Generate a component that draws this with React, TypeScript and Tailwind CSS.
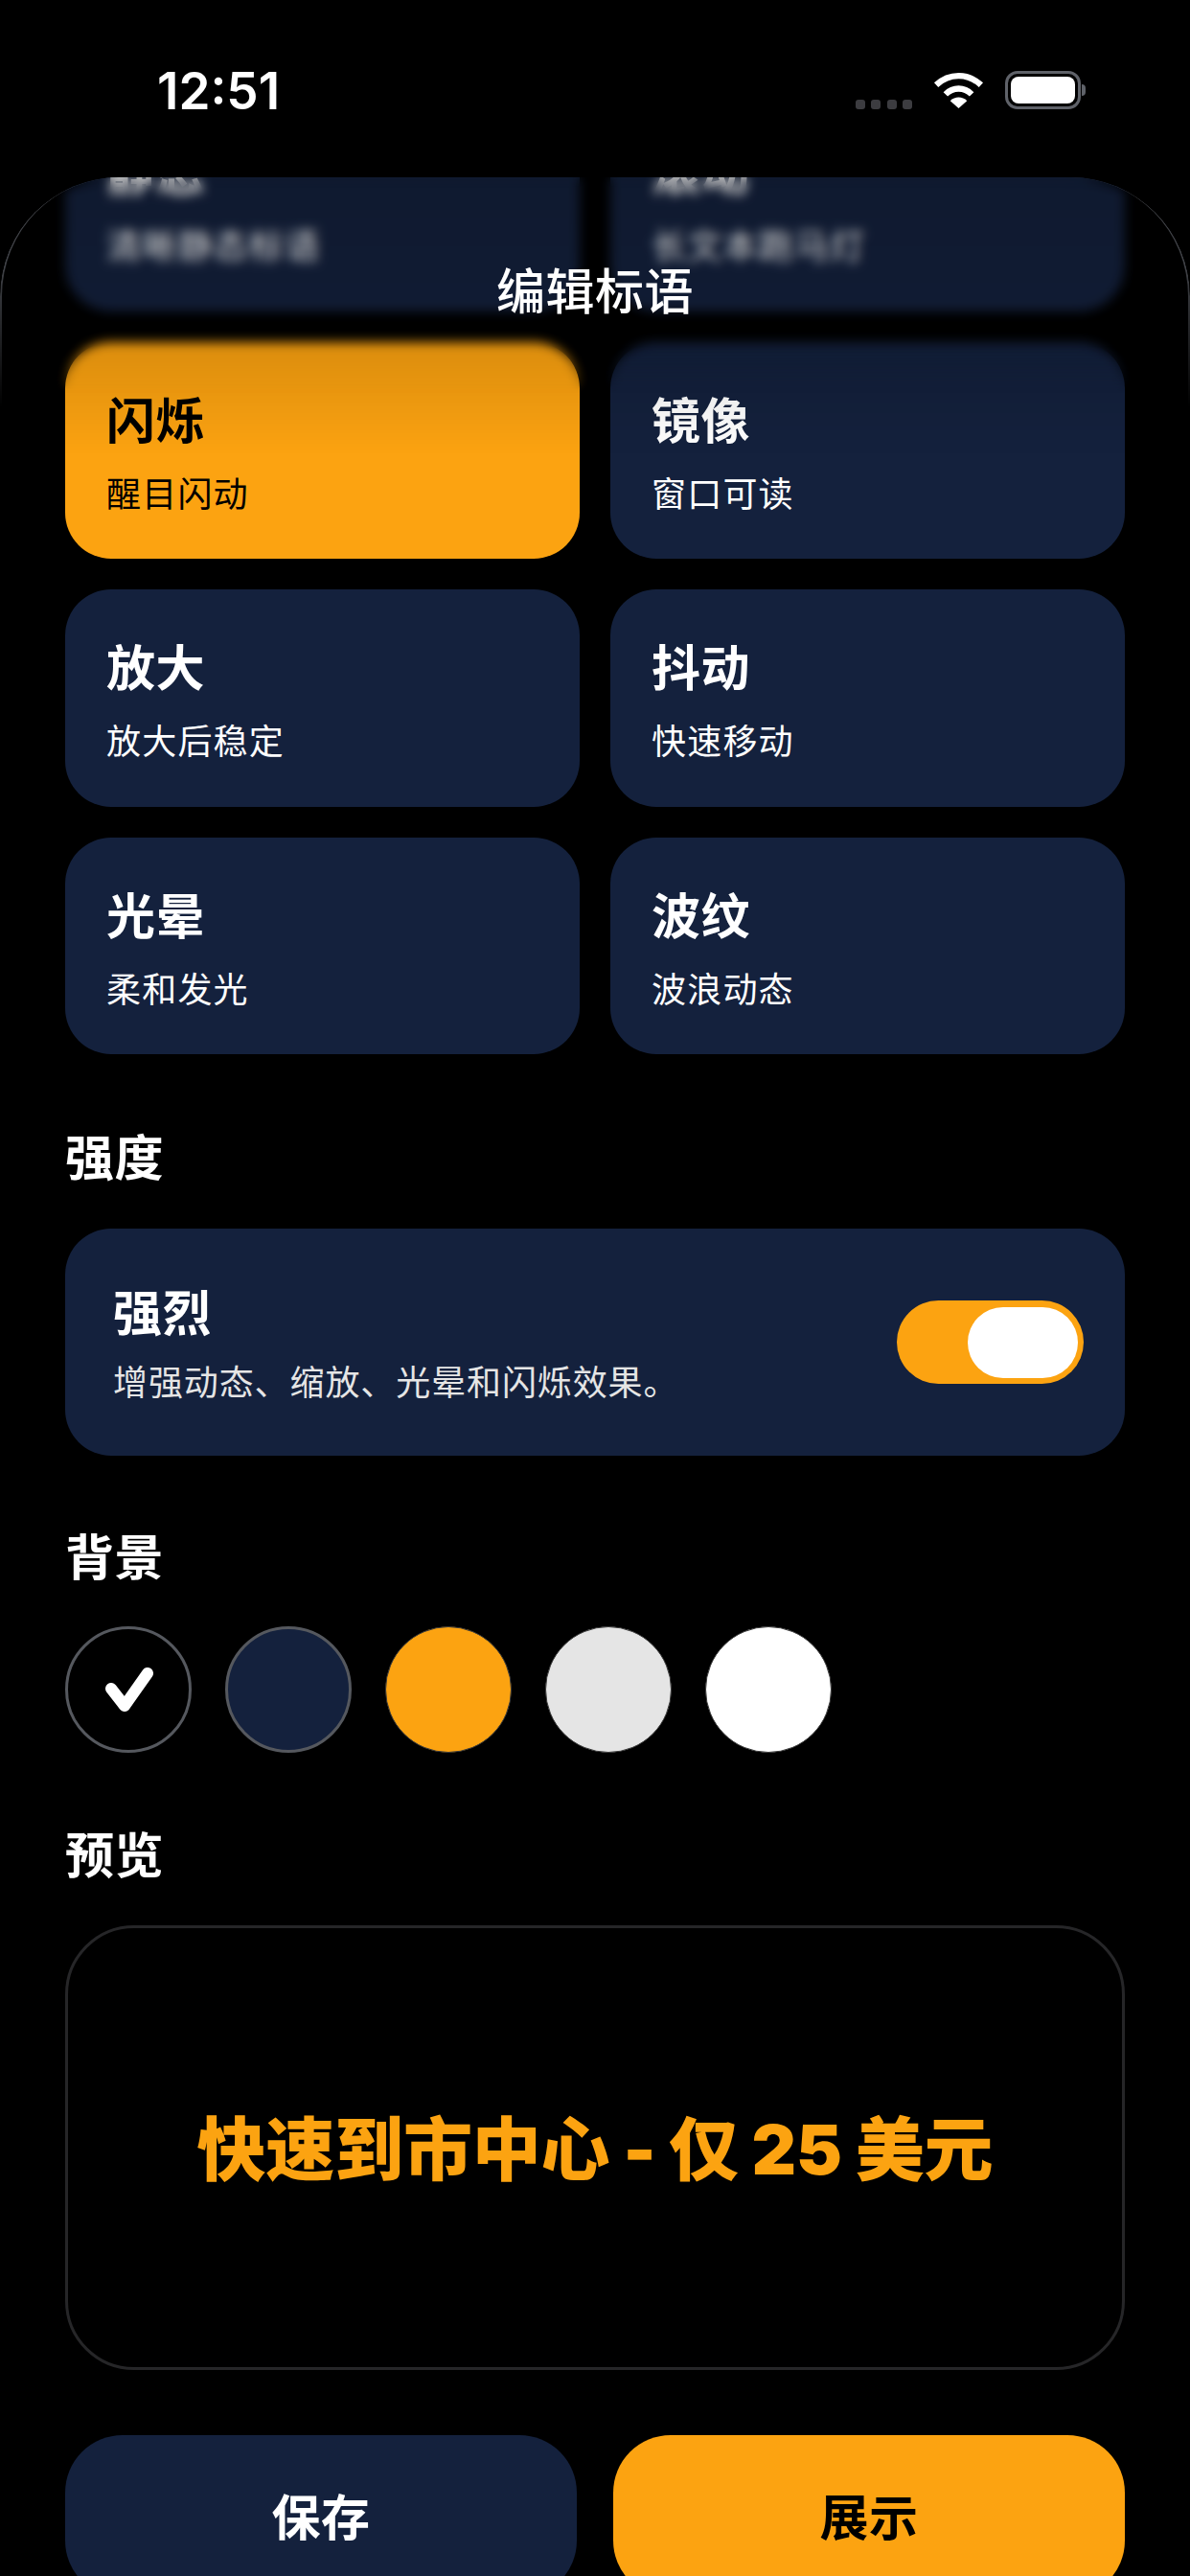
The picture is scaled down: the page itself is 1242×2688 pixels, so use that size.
const fontStack = { fontFamily: 'Inter, "Noto Sans CJK SC", "Noto Sans", sans-serif' }

const modes = [
  { title: '静态', desc: '清晰静态标语' },
  { title: '滚动', desc: '长文本跑马灯' },
  { title: '闪烁', desc: '醒目闪动', active: true },
  { title: '镜像', desc: '窗口可读' },
  { title: '放大', desc: '放大后稳定' },
  { title: '抖动', desc: '快速移动' },
  { title: '光晕', desc: '柔和发光' },
  { title: '波纹', desc: '波浪动态' },
]

const swatches = [
  { color: 'bg-black', border: 'border-[3px] border-[#55585e]', selected: true },
  { color: 'bg-[#14213d]', border: 'border-[3px] border-[#55585e]' },
  { color: 'bg-[#fca311]', border: 'border border-[#3a3a3a]' },
  { color: 'bg-[#e5e5e5]', border: 'border border-[#3a3a3a]' },
  { color: 'bg-white', border: 'border border-[#3a3a3a]' },
]

function StatusBar() {
  return (
    <div className="flex h-[185px] items-start justify-between pl-[164px] pr-[109px] pt-[64px]">
      <span className="text-[53px] font-semibold leading-[62px] text-white">12:51</span>
      <div className="flex items-center gap-[22px] pt-[10px]">
        <div className="mt-[29px] flex gap-[6.5px]">
          <span className="h-[10px] w-[10px] rounded-[3px] bg-[#3c3c40]" />
          <span className="h-[10px] w-[10px] rounded-[3px] bg-[#3c3c40]" />
          <span className="h-[10px] w-[10px] rounded-[3px] bg-[#3c3c40]" />
          <span className="h-[10px] w-[10px] rounded-[3px] bg-[#3c3c40]" />
        </div>
        <svg width="53" height="38" viewBox="0 0 54 39" fill="none">
          <path d="M3 14C17 1 37 1 51 14" stroke="white" strokeWidth="6.5" />
          <path d="M13 24C21 16 33 16 41 24" stroke="white" strokeWidth="6.5" />
          <path d="M27 39L18 31C23 26 31 26 36 31Z" fill="white" />
        </svg>
        <div className="flex items-center">
          <div className="h-[40px] w-[79px] rounded-[13px] border-[3px] border-[#5f6269] p-[3px]">
            <div className="h-full w-full rounded-[8px] bg-white" />
          </div>
          <span className="ml-[1px] h-[12px] w-[4px] rounded-r-full bg-[#5f6269]" />
        </div>
      </div>
    </div>
  )
}

function ModeCard({ title, desc, active }: { title: string; desc: string; active?: boolean }) {
  return (
    <div className={`h-[226.5px] rounded-[48px] px-[43px] pt-[47px] ${active ? 'bg-[#fca311] text-black' : 'bg-[#14213d] text-white'}`}>
      <div className="text-[51px] font-bold leading-[72px] tracking-[0.5px]">{title}</div>
      <div className="mt-[15px] text-[36px] leading-[50px] tracking-[1.2px]">{desc}</div>
    </div>
  )
}

function SectionTitle({ children }: { children: string }) {
  return <h2 className="text-[51px] font-bold leading-[70px] tracking-[0.5px] text-white">{children}</h2>
}

export default function App() {
  return (
    <div className="h-[2688px] overflow-hidden bg-black" style={fontStack}>
      <StatusBar />
      <div className="relative h-[2503px] overflow-hidden rounded-t-[124px]">
        <div className="-mt-[87px] px-[68px]">
          <div className="grid grid-cols-2 gap-[32px]">
            {modes.map((m) => (
              <ModeCard key={m.title} title={m.title} desc={m.desc} active={m.active} />
            ))}
          </div>

          <div className="mt-[74px]"><SectionTitle>强度</SectionTitle></div>
          <div className="mt-[38px] flex h-[237px] items-center justify-between rounded-[48px] bg-[#14213d] pl-[50px] pr-[43px]">
            <div className="pt-[6px] text-white">
              <div className="-mt-[4px] text-[51px] font-bold leading-[72px] tracking-[0.5px]">强烈</div>
              <div className="mt-[11px] text-[36px] leading-[50px] tracking-[0.9px] text-[#e5e5e5]">增强动态、缩放、光晕和闪烁效果。</div>
            </div>
            <div className="flex h-[87px] w-[195px] items-center justify-end rounded-full bg-[#fca311] pr-[6px]">
              <div className="h-[74px] w-[115px] rounded-full bg-white" />
            </div>
          </div>

          <div className="mt-[72px]"><SectionTitle>背景</SectionTitle></div>
          <div className="mt-[36px] flex gap-[35px]">
            {swatches.map((s) => (
              <div key={s.color} className={`flex h-[132px] w-[132px] items-center justify-center rounded-full ${s.color} ${s.border}`}>
                {s.selected && (
                  <svg width="51" height="48" viewBox="0 0 51 48" fill="none">
                    <path d="M7 23L21 41L45 7" stroke="white" strokeWidth="12" strokeLinecap="round" strokeLinejoin="round" />
                  </svg>
                )}
              </div>
            ))}
          </div>

          <div className="mt-[73px]"><SectionTitle>预览</SectionTitle></div>
          <div className="mt-[37px] flex h-[464px] items-center justify-center rounded-[72px] border-[3px] border-[#262628] pt-[4px]">
            <span className="text-[72px] font-black leading-none tracking-[-0.2px] text-[#fca311]">快速到市中心 - 仅 25 美元</span>
          </div>

          <div className="mt-[68px] flex justify-between">
            <div className="flex h-[170px] w-[534px] items-center justify-center rounded-[60px] bg-[#14213d] pt-[5px] text-[51px] font-bold tracking-[0.5px] text-white">保存</div>
            <div className="flex h-[170px] w-[534px] items-center justify-center rounded-[60px] bg-[#fca311] pt-[5px] text-[51px] font-bold tracking-[0.5px] text-black">展示</div>
          </div>
        </div>

        <div className="absolute inset-x-0 top-0 h-[225px] backdrop-blur-[6px] [mask-image:linear-gradient(to_bottom,black_78%,transparent)]" />
        <div className="absolute inset-x-0 top-0 h-[290px] bg-[linear-gradient(to_bottom,rgba(0,0,0,0.22),rgba(0,0,0,0.13)_60%,transparent)]" />
        <div className="absolute inset-x-0 top-0 h-[240px] rounded-t-[124px] border-x-2 border-[#3f4146] [mask-image:linear-gradient(to_bottom,black_40%,transparent)]" />
        <div className="absolute inset-x-0 top-[84px] text-center text-[51px] font-medium leading-[72px] tracking-[0.5px] text-white">编辑标语</div>
      </div>
    </div>
  )
}
